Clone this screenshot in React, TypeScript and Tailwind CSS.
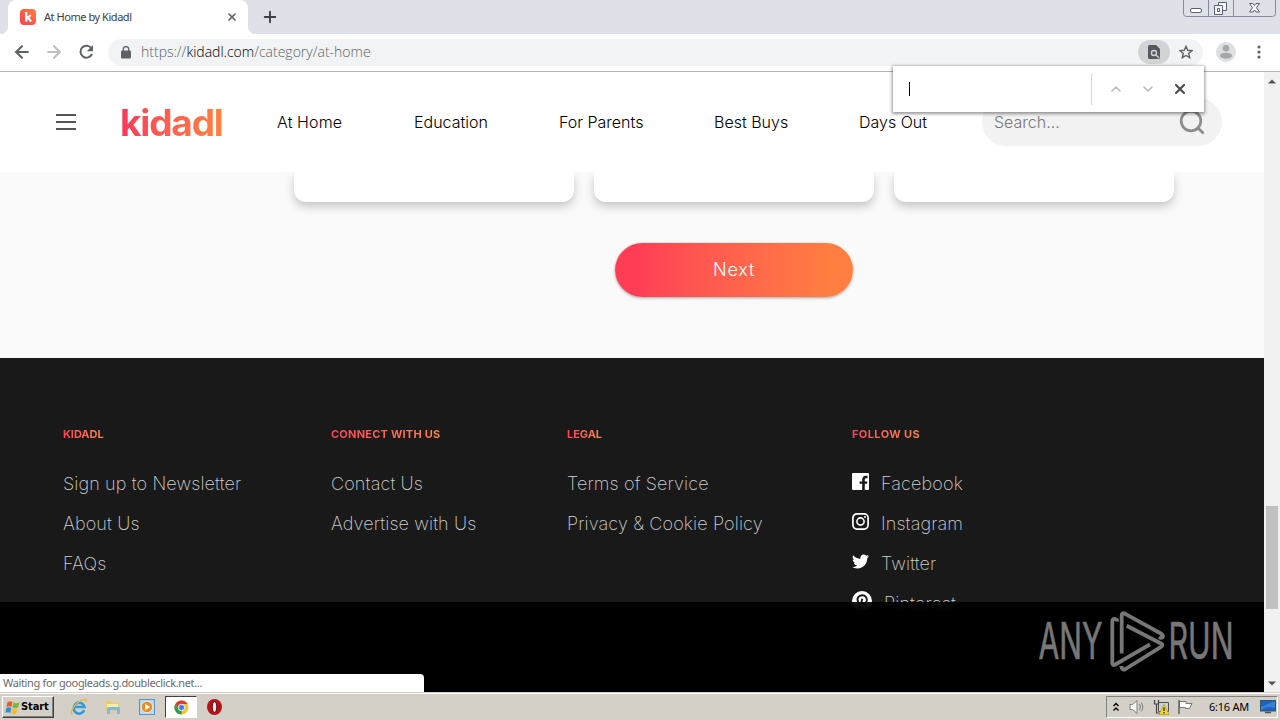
import { ArrowLeft, ArrowRight, ChevronDown, ChevronUp, Plus, X } from "lucide-react";
import { FaTwitter } from "react-icons/fa";

const navItems = [
  { label: "At Home", className: "w-[137px] tracking-[0.1px]" },
  { label: "Education", className: "w-[145px]" },
  { label: "For Parents", className: "w-[155px]" },
  { label: "Best Buys", className: "w-[145px]" },
  { label: "Days Out", className: "w-[123px]" },
];

const linkColumns = [
  {
    title: "KIDADL",
    className: "w-[268px]",
    links: ["Sign up to Newsletter", "About Us", "FAQs"],
  },
  {
    title: "CONNECT WITH US",
    className: "w-[236px]",
    links: ["Contact Us", "Advertise with Us"],
  },
  {
    title: "LEGAL",
    className: "w-[285px]",
    links: ["Terms of Service", "Privacy & Cookie Policy"],
  },
];

const FacebookIcon = () => (
  <svg width="17" height="17" viewBox="0 0 17 17">
    <rect width="17" height="17" rx="1" fill="#fff" />
    <path
      d="M10.2 17v-6.2H7.6V8.5h2.6V6.6c0-2.5 1.5-3.8 3.7-3.8h1.6v2.4h-1.2c-1.2 0-1.5.6-1.5 1.4v1.9h2.6l-.4 2.3h-2.2V17z"
      fill="#191919"
    />
  </svg>
);

const InstagramIcon = () => (
  <svg width="17" height="17" viewBox="0 0 17 17" fill="none" stroke="#fff">
    <rect x="0.9" y="0.9" width="15.2" height="15.2" rx="4" strokeWidth="1.7" />
    <circle cx="8.5" cy="8.5" r="3.6" strokeWidth="1.6" />
    <circle cx="13" cy="4.1" r="1" fill="#fff" stroke="none" />
  </svg>
);

const PinterestIcon = () => (
  <svg width="20" height="20" viewBox="0 0 20 20">
    <circle cx="10" cy="10" r="10" fill="#fff" />
    <path
      d="M6.3 11.2C4.2 7.5 6.7 4.3 10.2 4.3c3.2 0 5.1 2.2 4.6 5.1-.6 3.9-4.4 4.3-5.1 2.6M10.3 7.8 7.8 17"
      fill="none"
      stroke="#191919"
      strokeWidth="1.9"
    />
  </svg>
);

const socialLinks = [
  { label: "Facebook", icon: <FacebookIcon />, className: "gap-3" },
  { label: "Instagram", icon: <InstagramIcon />, className: "gap-3" },
  { label: "Twitter", icon: <FaTwitter size={17} color="#fff" />, className: "gap-3" },
  { label: "Pinterest", icon: <PinterestIcon />, className: "gap-3" },
];

const WindowButtons = () => (
  <svg className="ml-auto mr-1" width="93" height="17" viewBox="0 0 93 17" fill="none">
    <path d="M.5 0v13.5q0 3 3 3h86q3 0 3-3V0M25.5 0v16M50.5 0v16" stroke="#858b98" />
    <rect x="7.5" y="8.5" width="11" height="4" rx="1.5" fill="#fff" stroke="#596070" />
    <g fill="#f6f7f9" stroke="#596070">
      <path d="M35.5 2.5h8v8h-8z" />
      <path d="M31.5 5.5h8v9h-8z" />
      <path d="M34.5 8.5h2v3h-2z" />
      <path d="M66.5 3.5H70l1.5 2 1.5-2h3.5l-3 4.200 3 4.300H73l-1.500-2-1.500 2h-3.500l3-4.300z" />
    </g>
  </svg>
);

const TabStrip = () => (
  <div className="flex h-[34px] shrink-0 bg-[#dee1e8] pl-2">
    <div className="relative flex h-[34px] w-60 items-center rounded-t-lg bg-white pl-3">
      <div className="absolute -left-2 bottom-0 size-2 bg-[radial-gradient(circle_at_0_0,#dee1e8_8px,#fff_8.5px)]" />
      <div className="absolute -right-2 bottom-0 size-2 bg-[radial-gradient(circle_at_100%_0,#dee1e8_8px,#fff_8.5px)]" />
      <svg width="16" height="16" viewBox="0 0 16 16">
        <defs>
          <linearGradient id="favicon" x1="0" y1="1" x2="1" y2="0">
            <stop offset="0" stopColor="#fb3d55" />
            <stop offset="1" stopColor="#fd8040" />
          </linearGradient>
        </defs>
        <rect width="16" height="16" rx="4" fill="url(#favicon)" />
        <path d="M6.200 3v9.500M10.800 6 6.800 9.300M8 8.500l3 4" stroke="#fff" strokeWidth="2.200" />
      </svg>
      <span className="ml-2 font-[Tahoma,'Noto_Sans',sans-serif] text-[11px] tracking-[-0.45px] text-[#3c4043]">
        At Home by Kidadl
      </span>
      <X className="ml-auto mr-[10px] text-[#5f6368]" size={12} strokeWidth={3.4} />
    </div>
    <Plus className="ml-[13px] mt-2 text-[#3c4043]" size={18} strokeWidth={2.5} />
    <WindowButtons />
  </div>
);

const Toolbar = () => (
  <div className="flex h-[38px] shrink-0 items-center border-b border-[#b4b6b6] bg-white pb-px pl-3">
    <ArrowLeft className="text-[#5f6368]" size={20} strokeWidth={2.5} />
    <ArrowRight className="ml-3 text-[#bfc0c2]" size={20} strokeWidth={2.5} />
    <svg className="ml-3" width="20" height="20" viewBox="0 0 20 20" fill="none">
      <path d="M15.400 6.200A6 6 0 1 0 16 12" stroke="#5f6368" strokeWidth="2" />
      <path d="M17 3v6.200h-6.200z" fill="#5f6368" />
    </svg>
    <div className="ml-3 flex h-[27px] w-[1095px] items-center rounded-full bg-[#f1f3f4] pl-[13px]">
      <svg width="10" height="13" viewBox="0 0 10 13">
        <rect y="4.500" width="10" height="8" rx="1" fill="#5f6368" />
        <path d="M2.300 5V3.300a2.700 2.700 0 0 1 5.400 0V5" fill="none" stroke="#5f6368" strokeWidth="1.300" />
      </svg>
      <span className="ml-[10px] whitespace-nowrap font-['Open_Sans',sans-serif] text-[14px] leading-5 font-light text-[#5f6368]">
        https://<span className="text-black">kidadl.com</span>/category/at-home
      </span>
      <div className="ml-auto flex h-6 w-8 items-center justify-center rounded-full bg-[#d1d4d6]">
        <svg width="12" height="14" viewBox="0 0 12 14">
          <path d="M1.500 0H8l4 4v8.500q0 1.500-1.500 1.500h-9Q0 14 0 12.500v-11Q0 0 1.500 0z" fill="#55595e" />
          <circle cx="6" cy="8" r="2.500" fill="none" stroke="#d1d4d6" strokeWidth="1.400" />
          <path d="m7.800 9.800 3.200 3.200" stroke="#d1d4d6" strokeWidth="1.400" />
        </svg>
      </div>
      <svg className="ml-[9px] mr-[10px]" width="14" height="14" viewBox="0 0 14 14">
        <path
          d="m7 1.300 1.700 4 4.300.4-3.300 2.800 1 4.200L7 10.500l-3.700 2.200 1-4.200L1 5.700l4.300-.4z"
          fill="none"
          stroke="#5f6368"
          strokeWidth="1.400"
        />
      </svg>
    </div>
    <svg className="ml-[13px]" width="20" height="20" viewBox="0 0 20 20">
      <circle cx="10" cy="10" r="10" fill="#dedfe0" />
      <circle cx="10" cy="6.200" r="3.200" fill="#a5a7a9" />
      <ellipse cx="10" cy="13.700" rx="6" ry="3" fill="#a5a7a9" />
    </svg>
    <svg className="ml-[21px]" width="4" height="14" viewBox="0 0 4 14" fill="#5f6368">
      <circle cx="2" cy="2" r="1.600" />
      <circle cx="2" cy="7" r="1.600" />
      <circle cx="2" cy="12" r="1.600" />
    </svg>
  </div>
);

const FindBar = () => (
  <div className="absolute left-[893px] top-[66px] z-20 flex h-[46px] w-[311px] items-center bg-white shadow-[0_1px_3px_1px_rgba(0,0,0,0.4)]">
    <div className="ml-4 h-[14px] w-px bg-black" />
    <div className="ml-auto h-[31px] w-px bg-[#d5d7da]" />
    <ChevronUp className="ml-4 text-[#b9bbbe]" size={16} strokeWidth={2.5} />
    <ChevronDown className="ml-4 text-[#b9bbbe]" size={16} strokeWidth={2.5} />
    <X className="ml-4 mr-4 text-[#4d5156]" size={16} strokeWidth={3.4} />
  </div>
);

const SiteHeader = () => (
  <header className="flex h-[100px] shrink-0 items-center bg-white pl-14">
    <div className="flex w-5 flex-col gap-[5px]">
      <div className="h-[2px] bg-[#555]" />
      <div className="h-[2px] bg-[#555]" />
      <div className="h-[2px] bg-[#555]" />
    </div>
    <div className="ml-[44px] mt-[2px] w-[104px] whitespace-nowrap bg-linear-to-r from-[#fb3558] to-[#ff833f] bg-clip-text font-[Inter,sans-serif] text-[37px] leading-[44px] font-bold tracking-[-1.15px] text-transparent">
      kidadl
    </div>
    <nav className="ml-[53px] flex font-[Inter,sans-serif] text-base font-light text-black">
      {navItems.map((item) => (
        <a key={item.label} className={`whitespace-nowrap ${item.className}`}>
          {item.label}
        </a>
      ))}
    </nav>
    <div className="flex h-12 w-60 items-center rounded-full bg-[#f2f2f2] pl-3">
      <span className="font-[Inter,sans-serif] text-base font-light text-[#777]">Search...</span>
      <svg className="ml-auto mr-[17px]" width="26" height="26" viewBox="0 0 26 26" fill="none" stroke="#8c8c8c" strokeWidth="2.7">
        <circle cx="12" cy="12" r="9.8" />
        <path d="m18 18 6.5 6.5" />
      </svg>
    </div>
  </header>
);

const Listing = () => (
  <section className="flex h-[186px] shrink-0 flex-col bg-[#fafafa]">
    <div className="flex h-[60px] gap-5 overflow-hidden pl-[294px]">
      {[0, 1, 2].map((card) => (
        <div
          key={card}
          className="h-[30px] w-[280px] shrink-0 rounded-b-xl bg-white shadow-[0_5px_10px_rgba(0,0,0,0.2)]"
        />
      ))}
    </div>
    <button className="ml-[615px] mt-[11px] h-[54px] w-[238px] shrink-0 rounded-full bg-linear-to-r from-[#ff3e55] from-10% to-[#ff7e40] to-90% font-[Inter,sans-serif] text-lg font-light tracking-[0.8px] text-white shadow-[0_1px_3px_rgba(0,0,0,0.35)]">
      Next
    </button>
  </section>
);

const FooterTitle = ({ children, className = "" }: { children: string; className?: string }) => (
  <h3
    className={`w-fit whitespace-nowrap bg-linear-to-r from-[#ff405a] to-[#ff8548] bg-clip-text font-[Inter,sans-serif] text-[11px] leading-4 font-bold text-transparent ${className}`}
  >
    {children}
  </h3>
);

const SiteFooter = () => (
  <footer className="flex h-[334px] shrink-0 bg-[#191919] pl-[63px] pt-[68px] font-[Inter,sans-serif] text-lg font-extralight tracking-[0.12px] text-[#d0d0d0]">
    {linkColumns.map((column) => (
      <div key={column.title} className={column.className}>
        <FooterTitle className={column.title.length > 6 ? "tracking-[0.22px]" : "tracking-[-0.05px]"}>
          {column.title}
        </FooterTitle>
        <ul className="mt-[22px]">
          {column.links.map((link) => (
            <li key={link} className="h-10 whitespace-nowrap leading-10">
              {link}
            </li>
          ))}
        </ul>
      </div>
    ))}
    <div>
      <FooterTitle className="tracking-[0.4px]">FOLLOW US</FooterTitle>
      <ul className="mt-[22px]">
        {socialLinks.map((link) => (
          <li key={link.label} className={`flex h-10 items-center ${link.className}`}>
            <span className="-mt-[6px]">{link.icon}</span>
            {link.label}
          </li>
        ))}
      </ul>
    </div>
  </footer>
);

const Watermark = () => (
  <svg
    className="absolute left-[1036px] top-[606px] z-10"
    width="200"
    height="70"
    viewBox="0 0 200 70"
    fill="none"
    stroke="#777"
    strokeWidth="3.8"
    strokeLinejoin="round"
  >
    <g fill="#777" stroke="#777" strokeWidth="0.7" fontFamily="Inter, sans-serif" fontSize="50">
      <text x="2.500" y="52.800" textLength="64" lengthAdjust="spacingAndGlyphs">
        ANY
      </text>
      <text x="132.500" y="52.800" textLength="65" lengthAdjust="spacingAndGlyphs">
        RUN
      </text>
    </g>
    <path d="M81 15.500V14q-4.700-3-4.700 2v41q0 3 3 1.500L114 38.300" />
    <path d="M85.700 47.500V10q0-4 3.500-2.200L124 27q4.500 2.500 2.300 4.500-1.300 1-3.300-.5" />
    <path d="M90.700 19.700 125 37.500q3 1.500 0 3.300L89.500 63q-3.500 2-4.300-3" />
  </svg>
);

const ScrollBar = () => (
  <div className="flex w-4 shrink-0 flex-col items-center bg-[#f1f1f1]">
    <svg className="mt-[7px]" width="8" height="5" viewBox="0 0 8 5">
      <path d="m0 4.500 4-4 4 4z" fill="#505050" />
    </svg>
    <div className="mt-[422px] h-[103px] w-3 bg-[#c1c1c1]" />
    <svg className="mb-[6px] mt-auto" width="8" height="5" viewBox="0 0 8 5">
      <path d="m0 .5 4 4 4-4z" fill="#505050" />
    </svg>
  </div>
);

const InternetExplorerIcon = () => (
  <svg width="18" height="18" viewBox="0 0 18 18" fill="none">
    <path d="M14.200 12.300A5.500 5.500 0 1 1 14.500 9H5" stroke="#2f9be0" strokeWidth="2.600" />
    <path d="M2.500 16.500C-1 15 4 6.500 10 3c4-2.400 7-2 6 1" stroke="#e9bd3a" strokeWidth="1.400" />
  </svg>
);

const FolderIcon = () => (
  <svg width="16" height="16" viewBox="0 0 16 16">
    <path d="M1 2h5l1 1.500h7V12H1z" fill="#e8ca66" />
    <path d="M2 5h11v5H2z" fill="#fbeea8" />
    <path d="M2 15V9.500Q2 8 3.500 8h10Q15 8 15 9.500V15h-3v-4H5v4z" fill="#7fb9dc" />
  </svg>
);

const MediaPlayerIcon = () => (
  <svg width="16" height="16" viewBox="0 0 16 16">
    <rect x=".5" y=".5" width="15" height="15" fill="#b8daf2" stroke="#5a94c4" />
    <circle cx="8" cy="8" r="5.600" fill="#f08a1d" stroke="#fff" strokeWidth=".6" />
    <path d="m6.200 4.800 5 3.200-5 3.200z" fill="#fff" />
  </svg>
);

const ChromeIcon = () => (
  <svg width="15" height="15" viewBox="0 0 16 16">
    <circle cx="8" cy="8" r="7.500" fill="#f5c72c" />
    <path d="M1.500 4.250A7.500 7.500 0 0 1 14.500 4.250H8L5 10z" fill="#df3a2d" />
    <path d="M1.500 4.250 5 10l3.500 1.500L8 15.500A7.500 7.500 0 0 1 1.500 4.250z" fill="#319b49" />
    <circle cx="8" cy="8" r="3.400" fill="#3d7fe8" stroke="#fff" strokeWidth="1" />
  </svg>
);

const OperaIcon = () => (
  <svg width="15" height="16" viewBox="0 0 15 16">
    <ellipse cx="7.500" cy="8" rx="7.500" ry="8" fill="#b51319" />
    <ellipse cx="7.500" cy="8" rx="2.300" ry="5.500" fill="#f5e7e6" stroke="#5c0508" />
  </svg>
);

const Tray = () => (
  <div className="ml-auto mr-[2px] flex h-[22px] w-[172px] items-center border border-b-white border-l-[#808080] border-r-white border-t-[#808080] pl-[6px]">
    <svg width="6" height="10" viewBox="0 0 6 10" fill="none" stroke="#000" strokeWidth="1.400">
      <path d="m.5 4 2.500-2.500L5.500 4M.5 8.500 3 6l2.500 2.500" />
    </svg>
    <svg className="ml-[10px]" width="17" height="16" viewBox="0 0 17 16" fill="none" stroke="#7e7e7e">
      <path d="M1 5.500h2.500L8 1.500v13l-4.500-4H1z" fill="#f7f7f7" />
      <path d="M10.500 5q2 3 0 6M12.500 3.500q3 4.500 0 9" />
    </svg>
    <svg className="ml-[7px]" width="16" height="16" viewBox="0 0 16 16">
      <path d="M5.500 3.500h10v9h-10z" fill="#c8d0d8" stroke="#555" />
      <path d="M1.500 1v4h4V1M3.500 5v9h3" fill="none" stroke="#444" strokeWidth="1.200" />
      <path d="m11 5.500 5 10H6z" fill="#f9da22" stroke="#a98b00" strokeWidth=".6" />
      <path d="M11 8.500v3.500m0 1v1.500" stroke="#222" strokeWidth="1.300" />
    </svg>
    <svg className="ml-2" width="16" height="16" viewBox="0 0 16 16">
      <path d="M2.500 2.500h6.500v2h6l-2.500 5h-4v-1h-6z" fill="#fff" stroke="#777" />
      <path d="M2 1v14" stroke="#666" strokeWidth="1.600" />
    </svg>
    <span className="ml-4 whitespace-nowrap font-[Tahoma,'Noto_Sans',sans-serif] text-[11px] tracking-[-0.25px] text-black">
      6:16 AM
    </span>
    <svg className="ml-auto mr-[1px]" width="16" height="14" viewBox="0 0 16 14">
      <rect x=".5" y=".5" width="15" height="10.500" fill="#1c63c4" stroke="#35536f" />
      <path d="M1 7 15 1v7Q9 5 1 10z" fill="#3a80d4" />
      <path d="M5 12.500h6" stroke="#555" strokeWidth="1.500" />
    </svg>
  </div>
);

const TaskBar = () => (
  <div className="flex h-7 shrink-0 items-center border-t border-[#d4d0c8] bg-[#d4d0c8] pl-[2px] pt-[1px] shadow-[inset_0_1px_0_#fff]">
    <div className="flex h-[22px] w-[52px] items-center border border-b-[#404040] border-l-white border-r-[#404040] border-t-white pl-[2px] shadow-[inset_-1px_-1px_0_#808080]">
      <svg width="15" height="15" viewBox="0 0 15 15">
        <path d="M2.500 2q2.500-1.500 5 0l-1 5q-2.500-1.500-5 0z" fill="#e75b28" />
        <path d="M8.500 2.500q3 1.500 6 0l-1.500 5q-3 1.500-5.500 0z" fill="#79b83d" />
        <path d="M1.300 8q2.500-1.500 5 0l-1 5q-2.500-1.500-5 0z" fill="#368ad1" />
        <path d="M7.300 8.500q2.500 1.500 5.300 0l-1.300 5q-2.800 1.500-5 0z" fill="#f1bc2e" />
      </svg>
      <span className="ml-px font-[Tahoma,'DejaVu_Sans_Condensed','DejaVu_Sans',sans-serif] text-[11px] font-bold tracking-[-0.1px] text-black">
        Start
      </span>
    </div>
    <div className="ml-4 flex items-center">
      <InternetExplorerIcon />
      <div className="ml-[17px]">
        <FolderIcon />
      </div>
      <div className="ml-[18px]">
        <MediaPlayerIcon />
      </div>
      <div className="ml-[10px] flex h-[22px] w-8 items-center justify-center border border-b-white border-l-[#404040] border-r-white border-t-[#404040] bg-white">
        <ChromeIcon />
      </div>
      <div className="ml-[10px]">
        <OperaIcon />
      </div>
    </div>
    <Tray />
  </div>
);

export default function App() {
  return (
    <div className="relative flex h-[720px] w-[1280px] flex-col overflow-hidden bg-white">
      <TabStrip />
      <Toolbar />
      <FindBar />
      <div className="flex h-[620px] shrink-0">
        <main className="flex w-[1264px] flex-col">
          <SiteHeader />
          <Listing />
          <SiteFooter />
        </main>
        <ScrollBar />
      </div>
      <div className="absolute left-0 top-[602px] h-[90px] w-[1264px] bg-linear-to-b from-black/90 to-black to-[10px]" />
      <Watermark />
      <div className="absolute left-0 top-[674px] z-10 flex h-[18px] w-[424px] items-center whitespace-nowrap rounded-tr bg-white pl-[3px] font-[Tahoma,'Noto_Sans',sans-serif] text-[11px] tracking-[-0.35px] text-[#6b6b6b]">
        Waiting for googleads.g.doubleclick.net...
      </div>
      <TaskBar />
    </div>
  );
}
